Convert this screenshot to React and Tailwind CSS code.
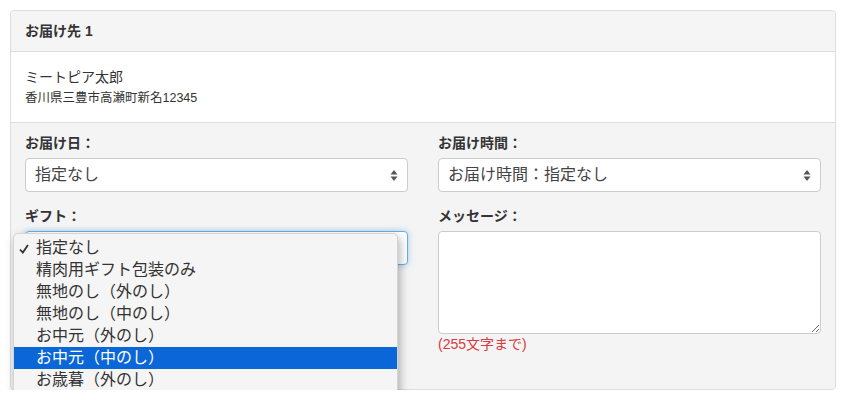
import React from "react";

const font = {
  fontFamily: '"Liberation Sans", "Noto Sans CJK JP", sans-serif',
};

const giftOptions = [
  "指定なし",
  "精肉用ギフト包装のみ",
  "無地のし（外のし）",
  "無地のし（中のし）",
  "お中元（外のし）",
  "お中元（中のし）",
  "お歳暮（外のし）",
  "お歳暮（中のし）",
];

const SelectArrows = () => (
  <svg width="8" height="13" viewBox="0 0 8 13" className="shrink-0">
    <path d="M4 1 L7.5 5.5 L0.5 5.5 Z" fill="#555" />
    <path d="M4 12 L7.5 7.5 L0.5 7.5 Z" fill="#555" />
  </svg>
);

const FakeSelect = ({ value, focused, children }) => (
  <div
    className={`relative h-[34px] rounded-[4px] bg-white flex items-center justify-between pl-[9px] pr-[9px] text-[16px] text-[#444] ${
      focused
        ? "border border-[#66afe9] shadow-[0_0_6px_rgba(102,175,233,0.6)]"
        : "border border-[#ccc]"
    }`}
  >
    <span>{value}</span>
    <SelectArrows />
    {children}
  </div>
);

const Label = ({ children }) => (
  <div className="h-[18px] leading-[18px] text-[14px] font-bold text-[#333] mb-[6px]">
    {children}
  </div>
);

// macOS style popup menu, cut off by the bottom of the window
const GiftMenu = () => (
  <div className="absolute left-[-13px] top-[1px] w-[385px] max-h-[167px] overflow-hidden z-10 bg-[#f5f5f5] border border-[#d4d4d4] rounded-t-[5px] pt-[3px] shadow-[2px_4px_10px_rgba(0,0,0,0.3)]">
    {giftOptions.map((opt, i) => (
      <div
        key={opt}
        className={`relative h-[22px] leading-[22px] pl-[22px] text-[16px] ${
          i === 5 ? "bg-[#0b67d8] text-white" : "text-[#333]"
        }`}
      >
        {i === 0 && (
          <svg width="10" height="10" viewBox="0 0 10 10" className="absolute left-[5px] top-[7px]">
            <path d="M1 5.5 L3.8 8.6 L9 1" fill="none" stroke="#333" strokeWidth="1.8" />
          </svg>
        )}
        {opt}
      </div>
    ))}
  </div>
);

export default function App() {
  return (
    <div className="pl-[10px] pt-[10px] bg-white" style={font}>
      <div className="w-[826px] h-[380px] border border-[#ddd] rounded-[4px]">
        <div className="h-[41px] bg-[#f5f5f5] border-b border-[#ddd] rounded-t-[4px] flex items-center px-[14px] text-[14px] font-bold text-[#333]">
          お届け先 1
        </div>

        <div className="h-[71px] border-b border-[#ddd] bg-white px-[14px] pt-[15px] text-[#333]">
          <p className="text-[14px] leading-[20px]">ミートピア太郎</p>
          <p className="text-[12.5px] leading-[18px] mt-[2px]">香川県三豊市高瀬町新名12345</p>
        </div>

        <div className="h-[266px] bg-[#f4f4f4] rounded-b-[4px] px-[14px] pt-[11px] grid grid-cols-2 gap-x-[30px] content-start">
          <div className="flex flex-col">
            <Label>お届け日：</Label>
            <FakeSelect value="指定なし" />
            <div className="mt-[15px]">
              <Label>ギフト：</Label>
            </div>
            <FakeSelect value="指定なし" focused>
              <GiftMenu />
            </FakeSelect>
          </div>

          <div className="flex flex-col">
            <Label>お届け時間：</Label>
            <FakeSelect value="お届け時間：指定なし" />
            <div className="mt-[15px]">
              <Label>メッセージ：</Label>
            </div>
            <textarea
              readOnly
              className="h-[103px] w-full bg-white border border-[#ccc] rounded-[4px] outline-none"
            />
            <p className="mt-[1px] text-[14px] leading-[18px] text-[#d9393f]">(255文字まで)</p>
          </div>
        </div>
      </div>
    </div>
  );
}
